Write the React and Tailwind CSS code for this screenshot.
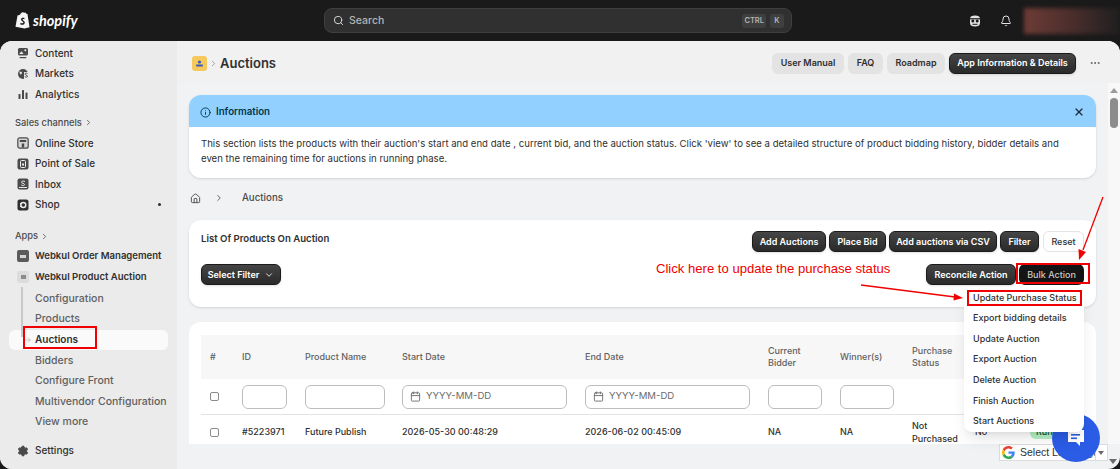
import React from 'react';
import { Search, Bell, ChevronRight, ChevronDown, Info, X, House, Calendar, Ellipsis, Settings, ArrowRight } from 'lucide-react';

const font = { fontFamily: 'Inter, "Noto Sans", sans-serif' };

// sidebar glyphs, drawn to match the admin's filled icons
const ContentIcon = (
  <svg width="12" height="12" viewBox="0 0 12 12">
    <rect x="1" y="1" width="10" height="7.5" rx="1.5" fill="#4a4a4a" />
    <circle cx="8.3" cy="3.2" r="1" fill="#ebebeb" />
    <path d="M2.2 7 L4.5 4.2 L6.5 7 Z" fill="#ebebeb" />
    <rect x="2.5" y="10" width="7" height="1.2" rx="0.6" fill="#4a4a4a" />
  </svg>
);
const MarketsIcon = (
  <svg width="12" height="12" viewBox="0 0 12 12">
    <circle cx="6" cy="6" r="5" fill="#4a4a4a" />
    <path d="M7 4 H12 V12 H7 Z" fill="#ebebeb" />
    <path d="M10.5 5.5 C9 4.6 7.8 5.4 8 6.2 C8.2 7.2 10.5 7 10.5 8.2 C10.5 9.2 9 9.4 7.8 8.7" stroke="#4a4a4a" strokeWidth="1" fill="none" />
    <path d="M2.5 3.5 L5 4 L4.5 6 L3 6.5 Z" fill="#ebebeb" />
  </svg>
);
const AnalyticsIcon = (
  <svg width="12" height="12" viewBox="0 0 12 12" fill="#4a4a4a">
    <rect x="1.5" y="6" width="2" height="5" rx="0.6" />
    <rect x="5" y="2" width="2" height="9" rx="0.6" />
    <rect x="8.5" y="4.5" width="2" height="6.5" rx="0.6" />
  </svg>
);
const StoreIcon = (
  <svg width="12" height="12" viewBox="0 0 12 12">
    <rect x="0.8" y="0.8" width="10.4" height="10.4" rx="2" fill="#d5d5d5" stroke="#4a4a4a" strokeWidth="1.2" />
    <rect x="2.8" y="3" width="6.4" height="2" fill="#4a4a4a" />
    <rect x="4.8" y="6.5" width="2.4" height="4" fill="#4a4a4a" />
  </svg>
);
const PosIcon = (
  <svg width="12" height="12" viewBox="0 0 12 12">
    <rect x="0.5" y="0.5" width="11" height="11" rx="2" fill="#4a4a4a" />
    <rect x="3.5" y="2.5" width="5" height="7" rx="1" fill="none" stroke="#ebebeb" strokeWidth="1" />
    <rect x="5" y="5.5" width="2" height="2" fill="#ebebeb" />
  </svg>
);
const InboxIcon = (
  <svg width="12" height="12" viewBox="0 0 12 12">
    <rect x="0.5" y="0.5" width="11" height="11" rx="2" fill="#4a4a4a" />
    <path d="M8 3.5 C6.5 2.7 4.5 3 4.5 4.2 C4.5 5.6 7.6 5.2 7.6 6.6 C7.6 7.7 5.4 7.7 4.2 7" stroke="#ebebeb" strokeWidth="1" fill="none" />
    <rect x="2" y="9" width="8" height="1" fill="#ebebeb" />
  </svg>
);
const ShopIcon = (
  <svg width="12" height="12" viewBox="0 0 12 12">
    <rect x="0.5" y="0.5" width="11" height="11" rx="2" fill="#303030" />
    <circle cx="6.3" cy="6" r="2.5" fill="none" stroke="#ebebeb" strokeWidth="1.4" />
    <rect x="3" y="4" width="2" height="1.2" fill="#ebebeb" />
    <rect x="3" y="6.8" width="2" height="1.2" fill="#ebebeb" />
  </svg>
);

function NavItem({ icon, label, bold, extra }) {
  return (
    <div className="h-[20.6px] flex items-center pl-[17px] pr-[20px] whitespace-nowrap">
      <span className="w-[18px] shrink-0 flex items-center text-[#4a4a4a]">{icon}</span>
      <span className={bold ? 'text-[9.55px] font-semibold text-[#303030]' : 'text-[10px] font-medium text-[#303030]'}>{label}</span>
      {extra}
    </div>
  );
}

function SubItem({ label, active }) {
  if (active) {
    return (
      <div className="h-[20.6px] mx-[9px] rounded-md bg-[#fafafa] flex items-center pl-[15px]">
        <ArrowRight size={8} className="text-[#b5b5b5] mr-[3px]" />
        <span className="text-[10px] font-semibold text-[#303030]">{label}</span>
      </div>
    );
  }
  return <div className="h-[20.6px] flex items-center pl-[35px] font-medium text-[#616161] whitespace-nowrap">{label}</div>;
}

function Sidebar() {
  return (
    <div className="w-[177px] shrink-0 bg-[#ebebeb] text-[10.5px] pt-[2px]">
      <NavItem icon={ContentIcon} label="Content" />
      <NavItem icon={MarketsIcon} label="Markets" />
      <NavItem icon={AnalyticsIcon} label="Analytics" />
      <div className="h-[20px] mt-[8px] flex items-center pl-[15px] text-[9.3px] font-medium text-[#4a4a4a]">
        Sales channels <ChevronRight size={9} className="ml-[2px]" />
      </div>
      <NavItem icon={StoreIcon} label="Online Store" />
      <NavItem icon={PosIcon} label="Point of Sale" />
      <NavItem icon={InboxIcon} label="Inbox" />
      <NavItem
        icon={ShopIcon}
        label="Shop"
        extra={<span className="ml-auto mr-[-4px] w-[3px] h-[3px] rounded-full bg-[#303030]" />}
      />
      <div className="h-[20px] mt-[11px] flex items-center pl-[15px] text-[9.3px] font-medium text-[#4a4a4a]">
        Apps <ChevronRight size={9} className="ml-[2px]" />
      </div>
      <NavItem
        icon={<span className="w-[12px] h-[12px] rounded-[2px] bg-[#5a5a5a] flex items-center justify-center"><span className="w-[6px] h-[3px] bg-[#d5d5d5]" /></span>}
        label="Webkul Order Management"
        bold
      />
      <NavItem
        icon={<span className="w-[12px] h-[12px] rounded-[2px] bg-[#dcdcdc] flex items-center justify-center"><span className="w-[5px] h-[4px] bg-[#8a8a8a]" /></span>}
        label="Webkul Product Auction"
        bold
      />
      <div className="relative mt-[1px]">
        <span className="absolute left-[21px] top-[-1px] w-[2px] h-[50px] bg-[#c9c9c9]" />
        <SubItem label="Configuration" />
        <SubItem label="Products" />
        <SubItem label="Auctions" active />
        <SubItem label="Bidders" />
        <SubItem label="Configure Front" />
        <SubItem label="Multivendor Configuration" />
        <SubItem label="View more" />
      </div>
      <div className="mt-[8px]">
        <NavItem icon={<Settings size={12} fill="#4a4a4a" />} label="Settings" />
      </div>
    </div>
  );
}

function DarkBtn({ children, className }) {
  return (
    <button className={'h-[21px] rounded-md bg-gradient-to-b from-[#454545] to-[#2a2a2a] border border-[#1a1a1a] text-white text-[9px] font-semibold flex items-center justify-center shadow-sm whitespace-nowrap ' + className}>
      {children}
    </button>
  );
}

function GreyBtn({ children, className }) {
  return (
    <button className={'h-[21px] rounded-md bg-[#e3e3e3] text-[#303030] text-[9px] font-semibold flex items-center justify-center ' + className}>
      {children}
    </button>
  );
}

function Box({ className, children }) {
  return (
    <div className={'h-[24px] rounded-md border border-[#bdbdbd] bg-white flex items-center text-[9.6px] text-[#6b6b6b] ' + className}>
      {children}
    </div>
  );
}

function DateBox() {
  return (
    <Box className="w-[165px] pl-[7px]">
      <Calendar size={11} className="mr-[5px]" />
      YYYY-MM-DD
    </Box>
  );
}

const tableCols = 'grid grid-cols-[32px_63px_97px_183px_183px_72px_72px_63px_55px_1fr] pl-[9px] items-center';

function AuctionTable() {
  return (
    <div className="mt-[15px] mx-[12px] h-[122px] bg-white rounded-t-xl px-[12px] pt-[13px] overflow-hidden">
      <div className={tableCols + ' h-[44px] bg-[#f7f7f7] text-[9px] font-medium text-[#616161] leading-[12.5px]'}>
        <div>#</div>
        <div>ID</div>
        <div>Product Name</div>
        <div>Start Date</div>
        <div>End Date</div>
        <div>Current<br />Bidder</div>
        <div>Winner(s)</div>
        <div>Purchase<br />Status</div>
      </div>
      <div className={tableCols + ' h-[36px] border-b border-[#e3e3e3]'}>
        <div><span className="block w-[9px] h-[9px] rounded-[2px] border border-[#8a8a8a]" /></div>
        <Box className="w-[45px]" />
        <Box className="w-[80px]" />
        <DateBox />
        <DateBox />
        <Box className="w-[54px]" />
        <Box className="w-[54px]" />
      </div>
      <div className={tableCols + ' h-[30px] text-[9px] font-medium text-[#303030] leading-[12.5px] pt-[5px]'}>
        <div><span className="block w-[9px] h-[9px] rounded-[2px] border border-[#8a8a8a]" /></div>
        <div>#5223971</div>
        <div>Future Publish</div>
        <div>2026-05-30 00:48:29</div>
        <div>2026-06-02 00:45:09</div>
        <div>NA</div>
        <div>NA</div>
        <div>Not<br />Purchased</div>
        <div>No</div>
        <div><span className="inline-block px-[6px] rounded-md bg-[#b4f0c4] text-[#0c5132]">Running</span></div>
      </div>
    </div>
  );
}

const bulkItems = ['Update Purchase Status', 'Export bidding details', 'Update Auction', 'Export Auction', 'Delete Auction', 'Finish Auction', 'Start Auctions'];

export default function App() {
  return (
    <div className="relative w-[1120px] h-[469px] overflow-hidden bg-[#1a1a1a] flex flex-col" style={font}>
      {/* top bar */}
      <div className="h-[41px] shrink-0 flex items-center relative">
        <div className="w-[324px] shrink-0 pl-[15px] flex items-center">
          <svg width="15" height="17" viewBox="0 0 15 17">
            <path d="M2.5 3.5 L5 2.7 C5.6 1 7 0 8.3 0.3 L9 0.8 L10.5 0.6 L11.3 1.8 L12.5 2 L14.5 15.2 L9.5 16.5 L0.5 14.8 Z" fill="#f4f4f4" />
            <path d="M9.6 6.2 C8 5.4 6 6 6 7.6 C6 9.3 8.4 9.3 8.4 10.6 C8.4 11.6 6.8 11.5 5.6 10.8 L5.2 12.2 C7 13.2 9.8 12.8 9.8 10.4 C9.8 8.6 7.5 8.4 7.5 7.4 C7.5 6.8 8.4 6.7 9.2 7.2 Z" fill="#1a1a1a" />
          </svg>
          <span className="ml-[3px] text-[14.5px] font-bold italic text-white" style={{ fontFamily: 'Lato, sans-serif' }}>shopify</span>
        </div>
        <div className="w-[468px] shrink-0 h-[25px] rounded-lg bg-[#303030] border border-[#3f3f3f] flex items-center pl-[8px] pr-[7px] text-[#b5b5b5]">
          <Search size={11} className="mr-[5px] text-[#e3e3e3]" />
          <span className="text-[10.5px] font-medium">Search</span>
          <span className="ml-auto h-[14px] px-[2px] rounded-[3px] bg-[#3f3f3f] text-[7.5px] font-semibold flex items-center">CTRL</span>
          <span className="ml-[4px] h-[14px] w-[14px] rounded-[3px] bg-[#3f3f3f] text-[7.5px] font-semibold flex items-center justify-center">K</span>
        </div>
        <svg className="ml-[177px] shrink-0" width="12" height="12" viewBox="0 0 12 12">
          <path d="M1 3.5 C1 1.5 3 0.5 6 0.5 C9 0.5 11 1.5 11 3.5 V8 C11 10.5 9 11.5 6 11.5 C3 11.5 1 10.5 1 8 Z" fill="#e3e3e3" />
          <rect x="0.5" y="3.2" width="11" height="1.2" fill="#1a1a1a" />
          <circle cx="3.8" cy="6" r="1.5" fill="#1a1a1a" />
          <circle cx="8.2" cy="6" r="1.5" fill="#1a1a1a" />
          <rect x="3.5" y="8.8" width="5" height="1" fill="#1a1a1a" />
        </svg>
        <Bell size={12} className="ml-[19px] shrink-0 text-[#e3e3e3]" />
        <div className="ml-[12px] w-[96px] shrink-0 h-[26px] blur-[2px] bg-gradient-to-r from-[#6e3b36] via-[#4a2e2c] to-[#1f1f1f]" />
      </div>

      {/* body */}
      <div className="flex-1 min-h-0 flex rounded-xl overflow-hidden bg-[#f1f2f4]">
        <Sidebar />
        <div className="flex-1 min-w-0 flex flex-col text-[#303030]">
          {/* page header */}
          <div className="h-[42px] shrink-0 bg-[#f1f1f1] flex items-center pl-[15px] pr-[19px] pt-[2px]">
            <span className="w-[15px] h-[15px] rounded-[3px] bg-[#f5c95c] flex items-center justify-center">
              <svg width="9" height="9" viewBox="0 0 9 9">
                <circle cx="4.5" cy="3" r="1.6" fill="#3b5bb5" />
                <rect x="1.2" y="5.5" width="6.6" height="2" fill="#3b5bb5" />
              </svg>
            </span>
            <ChevronRight size={9} className="ml-[2px] text-[#8a8a8a]" />
            <span className="ml-[2px] mt-[1px] text-[13px] font-semibold">Auctions</span>
            <div className="ml-auto flex items-center gap-[4px]">
              <GreyBtn className="w-[72px]">User Manual</GreyBtn>
              <GreyBtn className="w-[35px]">FAQ</GreyBtn>
              <GreyBtn className="w-[58px]">Roadmap</GreyBtn>
              <DarkBtn className="w-[127px]">App Information &amp; Details</DarkBtn>
              <Ellipsis size={12} className="ml-[9px] text-[#616161]" />
            </div>
          </div>

          {/* scrolling region */}
          <div className="h-[361px] shrink-0 flex">
            <div className="flex-1 min-w-0 overflow-hidden">
              <div className="mx-[12px] mt-[12px] h-[83px] rounded-xl bg-white shadow-sm overflow-hidden">
                <div className="h-[32px] bg-[#91d0ff] flex items-center pl-[11px] pr-[11px] pt-[2px]">
                  <Info size={11} className="text-[#00354d]" />
                  <span className="ml-[5px] text-[9.7px] font-semibold text-[#00354d]">Information</span>
                  <X size={12} strokeWidth={2.5} className="ml-auto text-[#1a2b3c]" />
                </div>
                <p className="pl-[12px] pr-[32px] pt-[9px] text-[9.6px] leading-[15px] text-[#303030]">
                  This section lists the products with their auction's start and end date , current bid, and the auction status. Click 'view' to see a detailed structure of product bidding history, bidder details and even the remaining time for auctions in running phase.
                </p>
              </div>

              <div className="mx-[13px] h-[42px] pb-[2px] flex items-center text-[9.7px] font-medium text-[#4a4a4a]">
                <House size={11} />
                <ChevronRight size={10} className="ml-[13px]" />
                <span className="ml-[18px]">Auctions</span>
              </div>

              <div className="mx-[12px] h-[87px] rounded-xl bg-white shadow-sm px-[12px] pt-[11px]">
                <div className="flex">
                  <span className="mt-[1px] text-[9.6px] font-semibold">List Of Products On Auction</span>
                  <div className="ml-auto flex gap-[3px]">
                    <DarkBtn className="w-[74px]">Add Auctions</DarkBtn>
                    <DarkBtn className="w-[57px]">Place Bid</DarkBtn>
                    <DarkBtn className="w-[108px]">Add auctions via CSV</DarkBtn>
                    <DarkBtn className="w-[39px]">Filter</DarkBtn>
                    <button className="ml-[1px] w-[41px] h-[21px] rounded-md bg-white border border-[#e3e3e3] text-[9px] font-medium">Reset</button>
                  </div>
                </div>
                <div className="flex mt-[12px]">
                  <DarkBtn className="w-[80px]">Select Filter <ChevronDown size={10} className="ml-[5px]" /></DarkBtn>
                  <div className="ml-auto flex gap-[3px]">
                    <DarkBtn className="w-[90px]">Reconcile Action</DarkBtn>
                    <button className="w-[65px] h-[21px] rounded-md bg-[#141414] text-[#c9c9c9] text-[9px] font-medium">Bulk Action</button>
                  </div>
                </div>
              </div>

              <AuctionTable />
            </div>

            {/* scrollbar */}
            <div className="w-[12px] shrink-0 bg-[#f8f8f8] relative flex justify-center">
              <svg className="mt-[5px] absolute" width="8" height="5" viewBox="0 0 8 5"><path d="M4 0 L8 5 L0 5 Z" fill="#9a9a9a" /></svg>
              <div className="mt-[15px] w-[8px] h-[30px] rounded-full bg-[#8c8c8c]" />
            </div>
          </div>
        </div>
      </div>

      {/* translate widget */}
      <div className="absolute left-[999px] top-[444px] w-[109px] h-[17px] bg-white border border-[#dcdcdc] flex items-center pl-[2px] text-[10.5px] text-[#303030] overflow-hidden whitespace-nowrap" style={{ fontFamily: '"Liberation Sans", sans-serif' }}>
        <svg width="13" height="13" viewBox="0 0 48 48" className="shrink-0">
          <path fill="#EA4335" d="M24 9.5c3.5 0 6.7 1.3 9.1 3.4l6.8-6.8C35.8 2.4 30.2 0 24 0 14.6 0 6.5 5.4 2.6 13.2l7.9 6.2C12.4 13.6 17.7 9.5 24 9.5z" />
          <path fill="#4285F4" d="M47 24.5c0-1.6-.1-3.1-.4-4.5H24v9h13c-.6 3-2.2 5.5-4.8 7.2l7.7 6C44.4 38 47 31.8 47 24.5z" />
          <path fill="#FBBC05" d="M10.5 28.6C10 27.2 9.8 25.6 9.8 24s.3-3.2.7-4.6l-7.9-6.2C.9 16.4 0 20.1 0 24s.9 7.6 2.6 10.8z" />
          <path fill="#34A853" d="M24 48c6.5 0 11.9-2.1 15.9-5.8l-7.7-6c-2.2 1.4-4.9 2.3-8.2 2.3-6.3 0-11.6-4.2-13.5-9.9l-7.9 6.2C6.5 42.6 14.6 48 24 48z" />
        </svg>
        <span className="ml-[5px]">Select Language</span>
        <span className="absolute right-[1px] top-0 h-full w-[11px] bg-white border-l border-[#dcdcdc] flex items-center justify-center">
          <svg width="6" height="4" viewBox="0 0 6 4"><path d="M0 0 L6 0 L3 4 Z" fill="#6b6b6b" /></svg>
        </span>
      </div>
      <svg className="absolute left-[1109px] top-[459px]" width="8" height="5" viewBox="0 0 8 5"><path d="M0 0 L8 0 L4 5 Z" fill="#6b6b6b" /></svg>

      {/* chat bubble */}
      <div className="absolute left-[1052px] top-[414px] w-[48px] h-[48px] rounded-full bg-[#2b5ce6] flex items-center justify-center">
        <svg width="20" height="20" viewBox="0 0 20 20">
          <path d="M2 2 H18 V14 H14 V18 L10 14 H2 Z" fill="#fff" />
          <rect x="5" y="6" width="9" height="1.6" fill="#2b5ce6" />
          <rect x="5" y="9.5" width="6" height="1.6" fill="#2b5ce6" />
        </svg>
      </div>

      {/* bulk action menu */}
      <div className="absolute left-[964px] top-[287px] w-[120px] h-[145px] rounded-lg bg-white shadow-lg text-[9px] font-medium text-[#303030]">
        {bulkItems.map((item) => (
          <div key={item} className="h-[20.6px] pl-[9px] flex items-center">{item}</div>
        ))}
      </div>

      {/* annotations */}
      <div className="absolute left-[23px] top-[326px] w-[74px] h-[23px] border-2 border-[#f00000]" />
      <div className="absolute left-[1016px] top-[263px] w-[74px] h-[21px] border-2 border-[#f00000]" />
      <div className="absolute left-[967px] top-[290px] w-[115px] h-[16px] border-2 border-[#f00000]" />
      <div className="absolute left-[656px] top-[259px] text-[13.1px] text-[#f00000]" style={{ fontFamily: '"Liberation Sans", sans-serif' }}>
        Click here to update the purchase status
      </div>
      <svg className="absolute left-0 top-0 pointer-events-none" width="1120" height="469">
        <line x1="1103" y1="197" x2="1083" y2="250" stroke="#f00000" strokeWidth="1.3" />
        <path d="M1079 260 L1078.5 249 L1086 252 Z" fill="#f00000" />
        <line x1="861" y1="285" x2="955" y2="297" stroke="#f00000" strokeWidth="1.3" />
        <path d="M963 298 L954 293.5 L953.5 300.5 Z" fill="#f00000" />
      </svg>
    </div>
  );
}
